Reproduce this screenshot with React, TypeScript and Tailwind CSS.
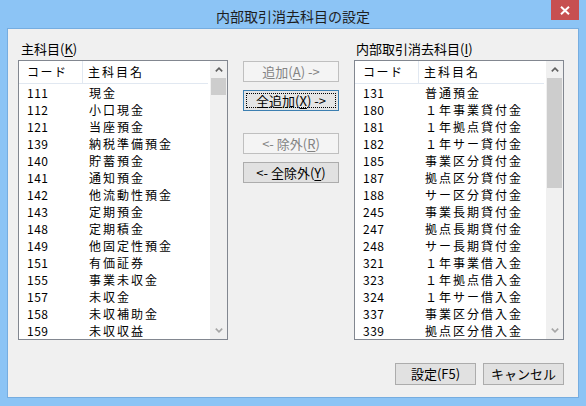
import React from 'react'

type Row = [string, string]

const leftRows: Row[] = [
    ['111', '現金'],
    ['112', '小口現金'],
    ['121', '当座預金'],
    ['139', '納税準備預金'],
    ['140', '貯蓄預金'],
    ['141', '通知預金'],
    ['142', '他流動性預金'],
    ['143', '定期預金'],
    ['148', '定期積金'],
    ['149', '他固定性預金'],
    ['151', '有価証券'],
    ['155', '事業未収金'],
    ['157', '未収金'],
    ['158', '未収補助金'],
    ['159', '未収収益'],
]

const rightRows: Row[] = [
    ['131', '普通預金'],
    ['180', '１年事業貸付金'],
    ['181', '１年拠点貸付金'],
    ['182', '１年サー貸付金'],
    ['185', '事業区分貸付金'],
    ['187', '拠点区分貸付金'],
    ['188', 'サー区分貸付金'],
    ['245', '事業長期貸付金'],
    ['247', '拠点長期貸付金'],
    ['248', 'サー長期貸付金'],
    ['321', '１年事業借入金'],
    ['323', '１年拠点借入金'],
    ['324', '１年サー借入金'],
    ['337', '事業区分借入金'],
    ['339', '拠点区分借入金'],
]

function Chevron({ up, color }: { up?: boolean; color: string }) {
    return (
        <svg width="8" height="5" viewBox="0 0 8 5">
            <polyline
                points={up ? '0.8,4.4 4,1.2 7.2,4.4' : '0.8,0.6 4,3.8 7.2,0.6'}
                fill="none"
                stroke={color}
                strokeWidth="1.6"
            />
        </svg>
    )
}

function ListBox({ rows, thumb }: { rows: Row[]; thumb: string }) {
    return (
        <div className="flex h-[280px] w-[210px] border border-[#828790] bg-white text-[12px]">
            <div className="min-w-0 flex-1 overflow-hidden pr-[2px]">
                {/* header */}
                <div className="flex h-[23px] items-center border-b border-[#e1e8f1]">
                    <div className="flex h-full w-[64px] items-center border-r border-[#e1e8f1] pl-[8px] tracking-[1.5px]">
                        コード
                    </div>
                    <div className="pl-[5px] tracking-[2px]">主科目名</div>
                </div>
                {rows.map(([code, name]) => (
                    <div key={code} className="flex h-[17px] items-center leading-[17px]">
                        <div className="w-[64px] pl-[8px] tracking-[0.5px]">{code}</div>
                        <div className="whitespace-nowrap pl-[6px] tracking-[2px]">{name}</div>
                    </div>
                ))}
            </div>
            {/* scrollbar */}
            <div className="flex w-[17px] flex-col bg-[#f0f0f0]">
                <div className="flex h-[17px] items-center justify-center">
                    <Chevron up color="#606060" />
                </div>
                <div className="flex-1">
                    <div className={`mx-[1px] bg-[#cdcdcd] ${thumb}`} />
                </div>
                <div className="flex h-[17px] items-center justify-center">
                    <Chevron color="#a6a6a6" />
                </div>
            </div>
        </div>
    )
}

function Button({
    children,
    disabled,
    focused,
    className = '',
}: {
    children: React.ReactNode
    disabled?: boolean
    focused?: boolean
    className?: string
}) {
    const look = disabled
        ? 'border-[#bfbfbf] bg-[#f4f4f4] text-[#838383]'
        : focused
          ? 'border-[#3c7fb1] bg-[#e5e5e5] text-black'
          : 'border-[#acacac] bg-[#e1e1e1] text-black'
    return (
        <div className={`flex items-center justify-center border p-[2px] ${look} ${className}`}>
            <div
                className={`flex h-full w-full items-center justify-center whitespace-nowrap border border-dotted ${
                    focused ? 'border-black' : 'border-transparent'
                }`}
            >
                {children}
            </div>
        </div>
    )
}

export default function App() {
    return (
        <div
            className="flex h-[406px] w-[586px] flex-col bg-[#8cc4f5] text-[13px] text-black"
            style={{ fontFamily: '"Noto Sans CJK JP", "Noto Sans", sans-serif' }}
        >
            {/* title bar */}
            <div className="flex h-[28px]">
                <div className="w-[35px]" />
                <div className="flex-1 pt-[6px] text-center text-[14px] leading-[20px] text-[#1e1e1e]">
                    内部取引消去科目の設定
                </div>
                <div className="w-[35px]">
                    <div className="flex h-[20px] w-[28px] items-center justify-center bg-[#c75050]">
                        <svg width="10" height="9" viewBox="0 0 10 9">
                            <path d="M1 0.8 L9 8.2 M9 0.8 L1 8.2" stroke="white" strokeWidth="2" />
                        </svg>
                    </div>
                </div>
            </div>

            {/* client area */}
            <div className="mx-[7px] flex h-[370px] flex-col border border-[#76ade0] bg-[#f0f0f0] pl-[10px] pr-[14px] pt-[12px]">
                <div className="flex">
                    <div className="w-[210px]">
                        <div className="mb-[3px] h-[16px] pl-[3px] leading-[16px]">
                            主科目(<u className="underline-offset-2">K</u>)
                        </div>
                        <ListBox rows={leftRows} thumb="h-[17px]" />
                    </div>

                    <div className="ml-[15px] flex w-[96px] flex-col pt-[20px]">
                        <Button disabled className="h-[21px]">
                            追加(<u className="underline-offset-2">A</u>) -&gt;
                        </Button>
                        <Button focused className="mt-[8px] h-[21px]">
                            全追加(<u className="underline-offset-2">X</u>) -&gt;
                        </Button>
                        <Button disabled className="mt-[22px] h-[21px]">
                            &lt;- 除外(<u className="underline-offset-2">R</u>)
                        </Button>
                        <Button className="mt-[8px] h-[21px]">
                            &lt;- 全除外(<u className="underline-offset-2">Y</u>)
                        </Button>
                    </div>

                    <div className="ml-[15px] w-[210px]">
                        <div className="mb-[3px] h-[16px] pl-[2px] leading-[16px]">
                            内部取引消去科目(<u className="underline-offset-2">I</u>)
                        </div>
                        <ListBox rows={rightRows} thumb="h-[110px]" />
                    </div>
                </div>

                <div className="mt-[23px] flex justify-end gap-[7px]">
                    <Button className="h-[22px] w-[81px]">設定(F5)</Button>
                    <Button className="h-[22px] w-[81px]">キャンセル</Button>
                </div>
            </div>
        </div>
    )
}
